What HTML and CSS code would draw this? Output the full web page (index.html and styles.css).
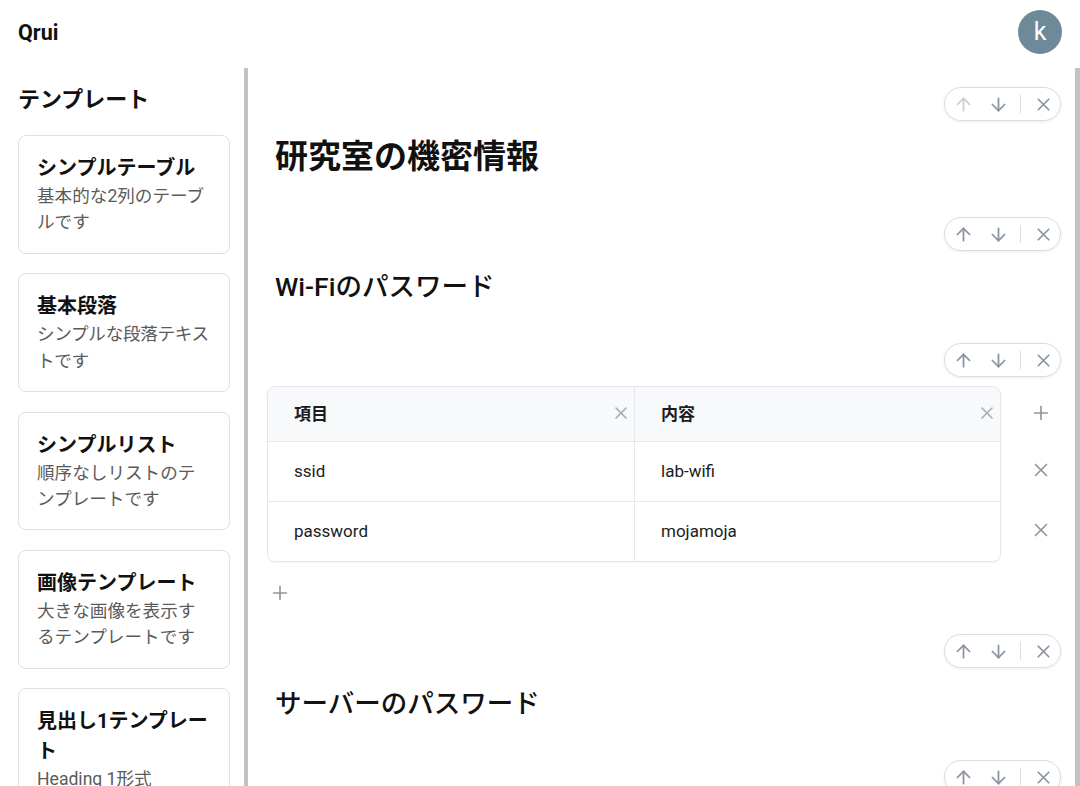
FILE: index.html
```html
<!DOCTYPE html>
<html lang="ja">
<head>
    <meta charset="UTF-8">
    <meta name="viewport" content="width=device-width, initial-scale=1.0">
    <title>Qrui</title>
    <link rel="stylesheet" href="styles.css">
</head>
<body>
    <header class="topbar">
        <div class="brand">Qrui</div>
        <div class="avatar">k</div>
    </header>

    <div class="layout">
        <aside class="sidebar">
            <h2 class="sidebar-title">テンプレート</h2>
            <div class="card">
                <div class="card-title">シンプルテーブル</div>
                <div class="card-desc">基本的な2列のテーブルです</div>
            </div>
            <div class="card">
                <div class="card-title">基本段落</div>
                <div class="card-desc tight">シンプルな段落テキストです</div>
            </div>
            <div class="card">
                <div class="card-title">シンプルリスト</div>
                <div class="card-desc">順序なしリストのテンプレートです</div>
            </div>
            <div class="card">
                <div class="card-title">画像テンプレート</div>
                <div class="card-desc">大きな画像を表示するテンプレートです</div>
            </div>
            <div class="card">
                <div class="card-title">見出し1テンプレート</div>
                <div class="card-desc">Heading 1形式</div>
            </div>
        </aside>

        <main class="editor">
            <section class="block">
                <div class="toolbar">
                    <div class="pill">
                        <button class="pill-btn disabled"><svg viewBox="0 0 24 24"><path d="m5 12 7-7 7 7"/><path d="M12 19V5"/></svg></button>
                        <button class="pill-btn"><svg viewBox="0 0 24 24"><path d="M12 5v14"/><path d="m19 12-7 7-7-7"/></svg></button>
                        <span class="pill-sep"></span>
                        <button class="pill-btn"><svg viewBox="0 0 24 24"><path d="M18 6 6 18"/><path d="m6 6 12 12"/></svg></button>
                    </div>
                </div>
                <h1 class="h1">研究室の機密情報</h1>
            </section>

            <section class="block">
                <div class="toolbar">
                    <div class="pill">
                        <button class="pill-btn"><svg viewBox="0 0 24 24"><path d="m5 12 7-7 7 7"/><path d="M12 19V5"/></svg></button>
                        <button class="pill-btn"><svg viewBox="0 0 24 24"><path d="M12 5v14"/><path d="m19 12-7 7-7-7"/></svg></button>
                        <span class="pill-sep"></span>
                        <button class="pill-btn"><svg viewBox="0 0 24 24"><path d="M18 6 6 18"/><path d="m6 6 12 12"/></svg></button>
                    </div>
                </div>
                <h2 class="h2">Wi-Fiのパスワード</h2>
            </section>

            <section class="block block-table">
                <div class="toolbar">
                    <div class="pill">
                        <button class="pill-btn"><svg viewBox="0 0 24 24"><path d="m5 12 7-7 7 7"/><path d="M12 19V5"/></svg></button>
                        <button class="pill-btn"><svg viewBox="0 0 24 24"><path d="M12 5v14"/><path d="m19 12-7 7-7-7"/></svg></button>
                        <span class="pill-sep"></span>
                        <button class="pill-btn"><svg viewBox="0 0 24 24"><path d="M18 6 6 18"/><path d="m6 6 12 12"/></svg></button>
                    </div>
                </div>
                <div class="table-wrap">
                    <div class="table">
                        <div class="tr thead">
                            <div class="td">項目<button class="col-del"><svg viewBox="0 0 24 24"><path d="M18 6 6 18"/><path d="m6 6 12 12"/></svg></button></div>
                            <div class="td">内容<button class="col-del"><svg viewBox="0 0 24 24"><path d="M18 6 6 18"/><path d="m6 6 12 12"/></svg></button></div>
                        </div>
                        <div class="tr">
                            <div class="td">ssid</div>
                            <div class="td">lab-wifi</div>
                        </div>
                        <div class="tr">
                            <div class="td">password</div>
                            <div class="td">mojamoja</div>
                        </div>
                    </div>
                    <div class="row-actions">
                        <button class="act head"><svg viewBox="0 0 24 24"><path d="M5 12h14"/><path d="M12 5v14"/></svg></button>
                        <button class="act"><svg viewBox="0 0 24 24"><path d="M18 6 6 18"/><path d="m6 6 12 12"/></svg></button>
                        <button class="act"><svg viewBox="0 0 24 24"><path d="M18 6 6 18"/><path d="m6 6 12 12"/></svg></button>
                    </div>
                </div>
                <button class="add-row"><svg viewBox="0 0 24 24"><path d="M5 12h14"/><path d="M12 5v14"/></svg></button>
            </section>

            <section class="block">
                <div class="toolbar">
                    <div class="pill">
                        <button class="pill-btn"><svg viewBox="0 0 24 24"><path d="m5 12 7-7 7 7"/><path d="M12 19V5"/></svg></button>
                        <button class="pill-btn"><svg viewBox="0 0 24 24"><path d="M12 5v14"/><path d="m19 12-7 7-7-7"/></svg></button>
                        <span class="pill-sep"></span>
                        <button class="pill-btn"><svg viewBox="0 0 24 24"><path d="M18 6 6 18"/><path d="m6 6 12 12"/></svg></button>
                    </div>
                </div>
                <h2 class="h2">サーバーのパスワード</h2>
            </section>

            <section class="block">
                <div class="toolbar">
                    <div class="pill">
                        <button class="pill-btn"><svg viewBox="0 0 24 24"><path d="m5 12 7-7 7 7"/><path d="M12 19V5"/></svg></button>
                        <button class="pill-btn"><svg viewBox="0 0 24 24"><path d="M12 5v14"/><path d="m19 12-7 7-7-7"/></svg></button>
                        <span class="pill-sep"></span>
                        <button class="pill-btn"><svg viewBox="0 0 24 24"><path d="M18 6 6 18"/><path d="m6 6 12 12"/></svg></button>
                    </div>
                </div>
                <p class="para">&nbsp;</p>
            </section>
        </main>
    </div>
</body>
</html>
```

FILE: styles.css
```css
* {
    box-sizing: border-box;
}
body {
    margin: 0;
    height: 100vh;
    overflow: hidden;
    font-family: Roboto, "Noto Sans CJK JP", sans-serif;
    color: #111;
    background: #fff;
    display: flex;
    flex-direction: column;
}
button {
    font: inherit;
    background: none;
    border: none;
    padding: 0;
    cursor: pointer;
}
svg {
    fill: none;
    stroke: currentColor;
    stroke-width: 2;
    stroke-linecap: round;
    stroke-linejoin: round;
    display: block;
}

.topbar {
    height: 68px;
    flex-shrink: 0;
    display: flex;
    align-items: center;
    justify-content: space-between;
    padding: 0 18px 4px 18px;
}
.brand {
    font-size: 21.5px;
    font-weight: bold;
}
.avatar {
    width: 44px;
    height: 44px;
    border-radius: 50%;
    background: #6e8a99;
    color: #fff;
    font-size: 25px;
    display: flex;
    align-items: center;
    justify-content: center;
    padding-bottom: 2px;
}

.layout {
    flex: 1;
    display: flex;
    min-height: 0;
}
.sidebar {
    width: 248px;
    flex-shrink: 0;
    padding: 19px 14px 0 18px;
    border-right: 4px solid #c2c2c2;
    overflow: hidden;
}
.sidebar-title {
    font-size: 22px;
    line-height: 26px;
    font-weight: bold;
    margin: 0 0 22px 0;
}
.card {
    border: 1px solid #e0e0e0;
    border-radius: 8px;
    padding: 17px 18px 17px 18px;
    margin-bottom: 19.5px;
}
.card-title {
    font-size: 20px;
    line-height: 30px;
    font-weight: bold;
    color: #111;
}
.card-desc {
    font-size: 17.6px;
    line-height: 26.4px;
    color: #5b5b5b;
}
.card-desc.tight {
    letter-spacing: -0.3px;
}

.editor {
    flex: 1;
    padding: 19px 14px 0 19px;
    border-right: 5px solid #c2c2c2;
    overflow: hidden;
}
.block {
    margin-bottom: 40px;
}
.block-table {
    margin-bottom: 29px;
}
.toolbar {
    display: flex;
    justify-content: flex-end;
}
.pill {
    height: 34px;
    display: flex;
    align-items: center;
    gap: 5px;
    padding: 0 2px 0 3px;
    border: 1px solid #dcdcdc;
    border-radius: 17px;
    box-shadow: 0 1px 3px rgba(0, 0, 0, 0.08);
}
.pill-btn {
    width: 30px;
    height: 30px;
    display: flex;
    align-items: center;
    justify-content: center;
    color: #8a93a0;
}
.pill-btn svg {
    width: 21px;
    height: 21px;
}
.pill-btn.disabled {
    color: #c9ced6;
}
.pill-sep {
    width: 1px;
    height: 18px;
    background: #dedede;
    margin: 0 2px;
}

.h1 {
    font-size: 33px;
    line-height: 40px;
    font-weight: bold;
    margin: 16px 0 0 0;
    padding-left: 8px;
}
.h2 {
    font-size: 26.5px;
    line-height: 32px;
    font-weight: 500;
    margin: 20px 0 0 0;
    padding-left: 8px;
}
.para {
    margin: 19px 0 0 0;
}

.table-wrap {
    display: flex;
    margin-top: 9px;
}
.table {
    flex: 1;
    border: 1px solid #e4e6ea;
    border-radius: 8px;
    overflow: hidden;
    box-shadow: 0 1px 2px rgba(0, 0, 0, 0.04);
}
.tr {
    display: grid;
    grid-template-columns: 1fr 1fr;
    height: 60px;
    border-top: 1px solid #e6e8eb;
}
.tr.thead {
    height: 54px;
    border-top: none;
    background: #f8f9fb;
    font-weight: bold;
}
.td {
    display: flex;
    align-items: center;
    justify-content: space-between;
    padding: 0 1px 1px 26px;
    font-size: 17px;
    color: #1c1c1c;
}
.thead .td {
    padding-bottom: 3px;
}
.td + .td {
    border-left: 1px solid #e6e8eb;
}
.col-del {
    width: 24px;
    height: 24px;
    display: flex;
    align-items: center;
    justify-content: center;
    color: #a3a8b0;
}
.col-del svg {
    width: 20px;
    height: 20px;
    stroke-width: 1.8;
}
.row-actions {
    width: 40px;
    margin-left: 20px;
    display: flex;
    flex-direction: column;
}
.act {
    height: 60px;
    display: flex;
    align-items: center;
    justify-content: center;
    color: #8f96a0;
}
.act.head {
    height: 54px;
}
.act svg {
    width: 22px;
    height: 22px;
    stroke-width: 1.8;
}
.add-row {
    margin-top: 19px;
    width: 26px;
    height: 24px;
    display: flex;
    align-items: center;
    justify-content: center;
    color: #8f96a0;
}
.add-row svg {
    width: 22px;
    height: 22px;
    stroke-width: 1.8;
}
```
